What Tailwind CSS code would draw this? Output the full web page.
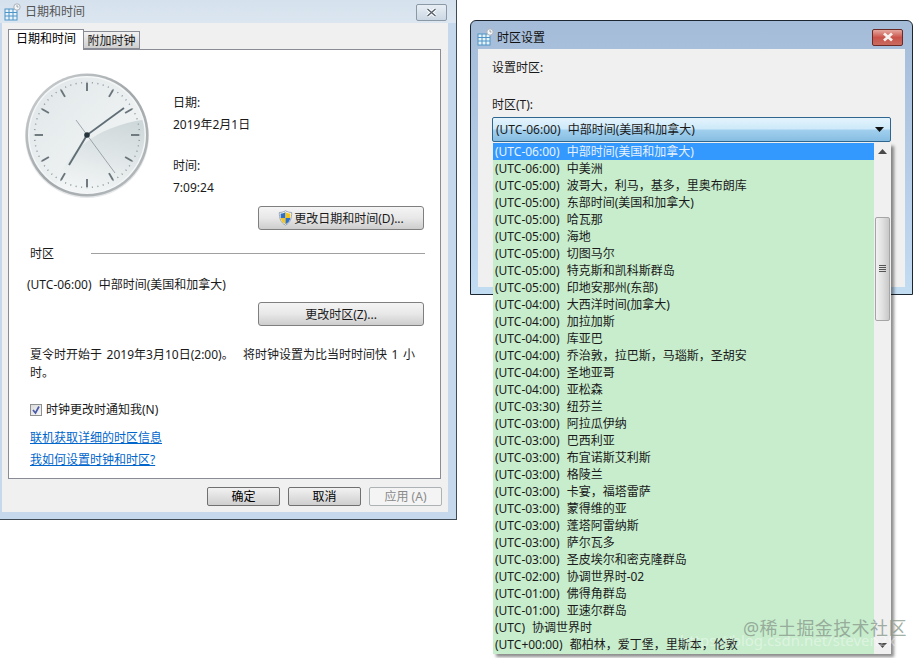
<!DOCTYPE html>
<html lang="zh">
<head>
<meta charset="UTF-8">
<title>日期和时间</title>
<script src="https://cdn.jsdelivr.net/npm/@tailwindcss/browser@4"></script>
</head>
<body class="bg-white">
<div class="relative w-[923px] h-[658px] overflow-hidden text-[12px] leading-[17px] text-[#1a1a1a] [font-family:'Noto_Sans','Noto_Sans_CJK_SC',sans-serif]">

  <!-- left window -->
  <div class="absolute left-0 top-0 w-[457px] h-[520px] flex flex-col pl-[2px] pr-[8px] pb-[7px] border-r border-b border-[#3f4a55] bg-[#c6d9ec]">
    <div class="h-[23px] -ml-[2px] -mr-[8px] pl-[4px] flex items-center gap-[4px] bg-gradient-to-b from-[#d5e1ec] to-[#dbe6f1] text-[#555]">
      <svg width="17" height="18" viewBox="0 0 17 18"><rect x="1" y="6" width="12" height="11" fill="#e8f3fb" stroke="#4e94c6"/><path d="M1 9.500h12M1 13h12M5 6v11M9 6v11" stroke="#4e94c6"/><circle cx="13" cy="4" r="3.200" fill="#f4f6f8" stroke="#a9b2ba"/><path d="M13 2v2h1.500" stroke="#7b858e" fill="none" stroke-width=".7"/></svg>
      <span>日期和时间</span>
      <div class="ml-auto mr-[9px] mt-[1px] w-[31px] h-[17px] rounded-[2px] border border-[#8b98a5] bg-gradient-to-b from-[#e8eef4] to-[#cbd7e3] flex items-center justify-center">
        <svg width="11" height="9" viewBox="0 0 11 9"><path d="M1.500 1l8 7M9.500 1l-8 7" stroke="#fff" stroke-width="3.400"/><path d="M1.500 1l8 7M9.500 1l-8 7" stroke="#56616c" stroke-width="1.400"/></svg>
      </div>
    </div>

    <div class="flex-1 flex flex-col bg-[#f0f0f0] pl-[6px] pr-[7px] pt-[6px]">
      <div class="flex items-end h-[20px]">
        <div class="relative z-10 w-[76px] h-[21px] -mb-px bg-white border border-b-0 border-[#898c95] text-center leading-[18px] text-black">日期和时间</div>
        <div class="w-[56px] h-[18px] bg-gradient-to-b from-[#f2f2f2] to-[#cfcfcf] border border-l-0 border-[#898c95] text-center leading-[18px]">附加时钟</div>
      </div>

      <div class="w-[433px] h-[430px] bg-white border border-[#898c95] flex flex-col">
        <div class="flex pl-[15px] pt-[22px]">
          <svg width="127" height="127" viewBox="0 0 127 127">
            <defs>
              <linearGradient id="rim" x1="0" y1="0" x2="1" y2="1"><stop offset="0" stop-color="#d0d4d6"/><stop offset=".5" stop-color="#a2a7aa"/><stop offset="1" stop-color="#b7bcbf"/></linearGradient>
              <linearGradient id="face" x1="0" y1="0" x2="1" y2="1"><stop offset="0" stop-color="#e0e6e8"/><stop offset=".6" stop-color="#edf1f2"/><stop offset="1" stop-color="#eef1f2"/></linearGradient>
              <linearGradient id="sweep" x1=".6" y1="0" x2=".35" y2="1"><stop offset="0" stop-color="#cfd8da"/><stop offset=".5" stop-color="#e2e8e9"/><stop offset="1" stop-color="#f6f8f8"/></linearGradient>
              <clipPath id="faceClip"><circle cx="63" cy="63" r="57.500"/></clipPath>
            </defs>
            <circle cx="63" cy="64" r="62" fill="#e6e8e9"/>
            <circle cx="63" cy="63" r="61.500" fill="url(#rim)"/>
            <circle cx="63" cy="63" r="59" fill="#f4f6f7"/>
            <circle cx="63" cy="63" r="57.500" fill="url(#face)"/>
            <path clip-path="url(#faceClip)" d="M30 118C42 78 72 54 124 47V127H30Z" fill="url(#sweep)"/>
            <circle cx="63" cy="63" r="52.500" fill="none" stroke="#8f9a9f" stroke-width="1.400" pathLength="60" stroke-dasharray=".2 .8" stroke-dashoffset=".1"/>
            <g stroke="#6a757b" stroke-width="1.900">
              <path d="M63 11v8"/>
              <path d="M63 11v8" transform="rotate(30 63 63)"/>
              <path d="M63 11v8" transform="rotate(60 63 63)"/>
              <path d="M63 11v8" transform="rotate(90 63 63)"/>
              <path d="M63 11v8" transform="rotate(120 63 63)"/>
              <path d="M63 11v8" transform="rotate(150 63 63)"/>
              <path d="M63 11v8" transform="rotate(180 63 63)"/>
              <path d="M63 11v8" transform="rotate(210 63 63)"/>
              <path d="M63 11v8" transform="rotate(240 63 63)"/>
              <path d="M63 11v8" transform="rotate(270 63 63)"/>
              <path d="M63 11v8" transform="rotate(300 63 63)"/>
              <path d="M63 11v8" transform="rotate(330 63 63)"/>
            </g>
            <path d="M63 63L100 36" stroke="#5f6d75" stroke-width="1.700"/>
            <path d="M63 63L45 93" stroke="#5f6d75" stroke-width="1.900"/>
            <path d="M52 48L91 101" stroke="#7d888e" stroke-width=".7"/>
            <circle cx="63" cy="63" r="2.800" fill="#26343c"/>
          </svg>
          <div class="ml-[22px] pt-[22px] flex flex-col">
            <div class="h-[17px]">日期:</div>
            <div class="h-[17px] mt-[5px]">2019年2月1日</div>
            <div class="h-[17px] mt-[24px]">时间:</div>
            <div class="h-[17px] mt-[5px]">7:09:24</div>
          </div>
        </div>

        <button class="self-end mr-[16px] mt-[7px] w-[166px] h-[24px] rounded-[3px] border border-[#7f7f7f] bg-gradient-to-b from-[#f4f4f4] via-[#e8e8e8] to-[#cdcdcd] flex items-center justify-center gap-px">
          <svg width="15" height="16" viewBox="0 0 15 16"><path d="M7.500.8C5.500 2 3.500 2.500 1.300 2.500 1.300 8 2.500 12.500 7.500 15.200 12.500 12.500 13.700 8 13.700 2.500 11.500 2.500 9.500 2 7.500.8Z" fill="#fff" stroke="#8492a6" stroke-width=".8"/><path d="M7.500 2C6 3 4.300 3.500 2.500 3.500L2.700 8H7.500Z" fill="#2f6fc4"/><path d="M7.500 2C9 3 10.700 3.500 12.500 3.500L12.300 8H7.500Z" fill="#f3c623"/><path d="M2.700 8C3 10.500 4.500 12.700 7.500 14.200V8Z" fill="#f3c623"/><path d="M12.300 8C12 10.500 10.500 12.700 7.500 14.200V8Z" fill="#2f6fc4"/></svg>
          <span>更改日期和时间(D)...</span>
        </button>

        <div class="mt-[15px] pl-[21px] pr-[15px] flex items-center h-[17px]">
          <span>时区</span>
          <div class="ml-[37px] flex-1 h-px bg-[#a0a0a0]"></div>
        </div>

        <div class="mt-[14px] pl-[18px] h-[17px] [word-spacing:4px]">(UTC-06:00) 中部时间(美国和加拿大)</div>

        <button class="self-end mr-[16px] mt-[9px] w-[166px] h-[24px] rounded-[3px] border border-[#7f7f7f] bg-gradient-to-b from-[#f4f4f4] via-[#e8e8e8] to-[#cdcdcd]">更改时区(Z)...</button>

        <div class="mt-[20px] pl-[21px] leading-[18px] [word-spacing:1.500px]">夏令时开始于 2019年3月10日(2:00)。&nbsp; 将时钟设置为比当时时间快 1 小<br>时。</div>

        <div class="mt-[19px] pl-[21px] flex items-center gap-[4px] h-[17px]">
          <div class="w-[12px] h-[12px] border border-[#8e8f8f] bg-gradient-to-br from-[#dcdcdc] to-[#f6f6f6] flex items-center justify-center">
            <svg width="10" height="10" viewBox="0 0 10 10"><path d="M2 5l2.500 3L8 1.500" fill="none" stroke="#4a5aa8" stroke-width="1.700"/></svg>
          </div>
          <span>时钟更改时通知我(N)</span>
        </div>

        <a class="mt-[11px] ml-[21px] h-[17px] text-[#0066cc] underline self-start">联机获取详细的时区信息</a>
        <a class="mt-[5px] ml-[21px] h-[17px] text-[#0066cc] underline self-start">我如何设置时钟和时区?</a>
      </div>

      <div class="pt-[8px] -mr-px flex justify-end gap-[8px]">
        <button class="w-[73px] h-[19px] rounded-[2px] border border-[#707070] bg-gradient-to-b from-[#f2f2f2] to-[#cfcfcf] leading-[16px] text-black">确定</button>
        <button class="w-[73px] h-[19px] rounded-[2px] border border-[#707070] bg-gradient-to-b from-[#f2f2f2] to-[#cfcfcf] leading-[16px] text-black">取消</button>
        <button class="w-[73px] h-[19px] rounded-[2px] border border-[#adb2b5] bg-[#f4f4f4] leading-[16px] text-[#8a8a8a]">应用 (A)</button>
      </div>
    </div>
  </div>

  <!-- time zone window -->
  <div class="absolute left-[470px] top-[20px] w-[443px] h-[275px] rounded-t-[6px] border border-[#1c2630] bg-gradient-to-b from-[#a4bcd8] via-[#b4cbe6] to-[#c2dcf2] flex flex-col px-[7px] pb-[7px]">
    <div class="h-[28px] pt-[4px] -ml-[1px] -mr-[5px] flex items-center gap-[3px] text-[#111]">
      <svg width="17" height="18" viewBox="0 0 17 18"><rect x="1" y="6" width="12" height="11" fill="#e8f3fb" stroke="#4e94c6"/><path d="M1 9.500h12M1 13h12M5 6v11M9 6v11" stroke="#4e94c6"/><circle cx="13" cy="4" r="3.200" fill="#f4f6f8" stroke="#a9b2ba"/><path d="M13 2v2h1.500" stroke="#7b858e" fill="none" stroke-width=".7"/></svg>
      <span>时区设置</span>
      <div class="ml-auto mr-[7px] w-[31px] h-[17px] rounded-[2px] border border-[#6b2a25] bg-gradient-to-b from-[#e4a79f] via-[#c9534a] to-[#c96b5f] flex items-center justify-center">
        <svg width="12" height="10" viewBox="0 0 12 10"><path d="M2 1.500l8 7M10 1.500l-8 7" stroke="#f5f0ee" stroke-width="2.800"/></svg>
      </div>
    </div>
    <div class="flex-1 bg-[#f0f0f0] px-[14px] flex flex-col">
      <div class="mt-[10px] h-[17px]">设置时区:</div>
      <div class="mt-[20px] h-[17px]">时区(T):</div>
      <div class="mt-[4px] w-[399px] h-[25px] rounded-[2px] border border-[#2f6690] bg-[linear-gradient(#e4f4fd,#cde9f9_48%,#a2d0ee_52%,#86bde2)] flex items-center pl-[3px] pr-[6px]">
        <span class="[word-spacing:4px]">(UTC-06:00) 中部时间(美国和加拿大)</span>
        <svg class="ml-auto" width="9" height="5" viewBox="0 0 9 5"><path d="M0 0h9L4.500 5Z" fill="#111"/></svg>
      </div>
    </div>
  </div>

  <!-- open dropdown over the window -->
  <div class="absolute left-[493px] top-[143px] w-[398px] h-[511px] flex shadow-[3px_3px_3px_rgba(0,0,0,0.45)]">
    <div class="flex-1 bg-[#c7edcc] flex flex-col pl-[2px] [word-spacing:4px]">
      <div class="h-[17px] -ml-[2px] pl-[2px] bg-[#3399ff] text-[#e8f2ff]">(UTC-06:00) 中部时间(美国和加拿大)</div>
      <div class="h-[17px]">(UTC-06:00) 中美洲</div>
      <div class="h-[17px]">(UTC-05:00) 波哥大，利马，基多，里奥布朗库</div>
      <div class="h-[17px]">(UTC-05:00) 东部时间(美国和加拿大)</div>
      <div class="h-[17px]">(UTC-05:00) 哈瓦那</div>
      <div class="h-[17px]">(UTC-05:00) 海地</div>
      <div class="h-[17px]">(UTC-05:00) 切图马尔</div>
      <div class="h-[17px]">(UTC-05:00) 特克斯和凯科斯群岛</div>
      <div class="h-[17px]">(UTC-05:00) 印地安那州(东部)</div>
      <div class="h-[17px]">(UTC-04:00) 大西洋时间(加拿大)</div>
      <div class="h-[17px]">(UTC-04:00) 加拉加斯</div>
      <div class="h-[17px]">(UTC-04:00) 库亚巴</div>
      <div class="h-[17px]">(UTC-04:00) 乔治敦，拉巴斯，马瑙斯，圣胡安</div>
      <div class="h-[17px]">(UTC-04:00) 圣地亚哥</div>
      <div class="h-[17px]">(UTC-04:00) 亚松森</div>
      <div class="h-[17px]">(UTC-03:30) 纽芬兰</div>
      <div class="h-[17px]">(UTC-03:00) 阿拉瓜伊纳</div>
      <div class="h-[17px]">(UTC-03:00) 巴西利亚</div>
      <div class="h-[17px]">(UTC-03:00) 布宜诺斯艾利斯</div>
      <div class="h-[17px]">(UTC-03:00) 格陵兰</div>
      <div class="h-[17px]">(UTC-03:00) 卡宴，福塔雷萨</div>
      <div class="h-[17px]">(UTC-03:00) 蒙得维的亚</div>
      <div class="h-[17px]">(UTC-03:00) 蓬塔阿雷纳斯</div>
      <div class="h-[17px]">(UTC-03:00) 萨尔瓦多</div>
      <div class="h-[17px]">(UTC-03:00) 圣皮埃尔和密克隆群岛</div>
      <div class="h-[17px]">(UTC-02:00) 协调世界时-02</div>
      <div class="h-[17px]">(UTC-01:00) 佛得角群岛</div>
      <div class="h-[17px]">(UTC-01:00) 亚速尔群岛</div>
      <div class="h-[17px]">(UTC) 协调世界时</div>
      <div class="h-[17px]">(UTC+00:00) 都柏林，爱丁堡，里斯本，伦敦</div>
    </div>
    <div class="w-[17px] bg-[#f0f0f0] flex flex-col items-center">
      <div class="h-[17px] flex items-center justify-center">
        <svg width="9" height="5" viewBox="0 0 9 5"><path d="M0 5L4.500 0 9 5Z" fill="#4a4a4a"/></svg>
      </div>
      <div class="mt-[57px] w-[15px] h-[104px] rounded-[2px] border border-[#a5a5a5] bg-gradient-to-r from-[#f2f2f2] via-[#e0e0e0] to-[#c8c8c8] flex items-center justify-center">
        <svg width="7" height="8" viewBox="0 0 7 8"><path d="M0 .5h7M0 2.500h7M0 4.500h7M0 6.500h7" stroke="#555"/></svg>
      </div>
      <div class="mt-auto h-[17px] flex items-center justify-center">
        <svg width="9" height="5" viewBox="0 0 9 5"><path d="M0 0L4.500 5 9 0Z" fill="#4a4a4a"/></svg>
      </div>
    </div>
  </div>

  <!-- watermarks -->
  <div class="absolute left-[680px] top-[631px] text-[15px] leading-[18px] text-white/40 whitespace-nowrap">https://blog.csdn.net/steven2xupt</div>
  <div class="absolute left-[743px] top-[616px] text-[18px] leading-[24px] tracking-[0.4px] text-[#8a9a8c]/80 whitespace-nowrap">@稀土掘金技术社区</div>
</div>
</body>
</html>
